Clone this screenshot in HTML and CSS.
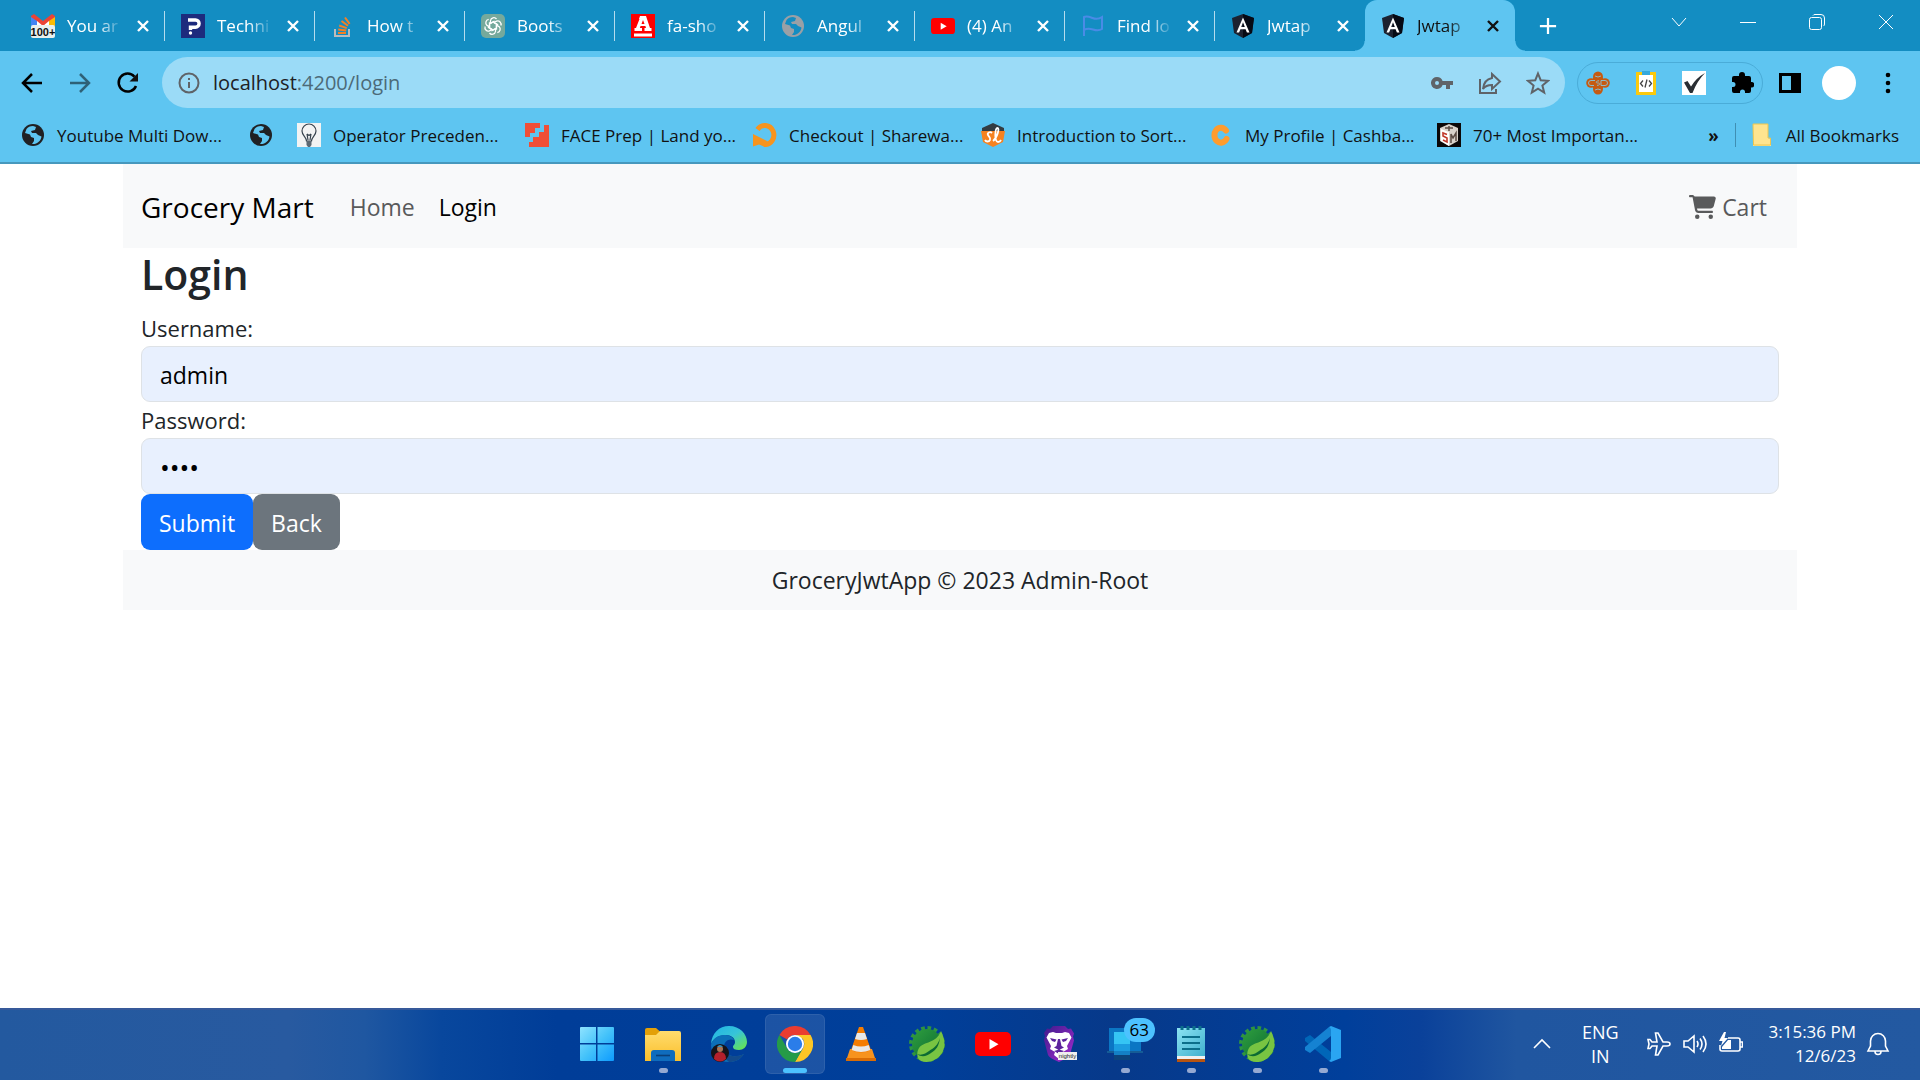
FILE: index.html
```html
<!DOCTYPE html>
<html lang="en">
<head>
<meta charset="utf-8">
<title>Jwtapp</title>
<link rel="stylesheet" href="styles.css">
</head>
<body>
<svg class="defs" aria-hidden="true">
  <defs>
    <linearGradient id="g-win" x1="0" y1="0" x2="1" y2="1"><stop offset="0" stop-color="#8fe3ff"/><stop offset=".5" stop-color="#45c3fa"/><stop offset="1" stop-color="#0d9bff"/></linearGradient>
    <linearGradient id="g-folder" x1="0" y1="0" x2="0" y2="1"><stop offset="0" stop-color="#ffdc6e"/><stop offset="1" stop-color="#fbbf2b"/></linearGradient>
    <linearGradient id="g-edge" x1="0" y1="0" x2="1" y2="1"><stop offset="0" stop-color="#1fb3e6"/><stop offset=".5" stop-color="#37c4d8"/><stop offset="1" stop-color="#6ce83f"/></linearGradient>
    <linearGradient id="g-brave" x1="0" y1="0" x2="1" y2="1"><stop offset="0" stop-color="#3f1c8c"/><stop offset="1" stop-color="#a62bd0"/></linearGradient>
    <linearGradient id="g-note" x1="0" y1="0" x2="1" y2="1"><stop offset="0" stop-color="#8ce3f2"/><stop offset="1" stop-color="#3fb0cf"/></linearGradient>
    <linearGradient id="g-spring" x1="0" y1="0" x2="1" y2="1"><stop offset="0" stop-color="#2f9e3e"/><stop offset="1" stop-color="#0b6b33"/></linearGradient>
    <symbol id="close" viewBox="0 0 16 16"><path d="M3 3l10 10M13 3L3 13" fill="none" stroke="currentColor" stroke-width="2.4"/></symbol>
    <symbol id="globe" viewBox="0 0 24 24"><circle cx="12" cy="12" r="11" fill="currentColor"/><path d="M12 3c-3 0-5 1-6.500 3L4 10l5 1.500 1 2.500 3 1v3l-2 3c5 .500 9-3 9.500-7.500L17 12l-2-2h-4l-1-2 4-1 1-3z" fill="var(--land)"/></symbol>
    <symbol id="angular" viewBox="0 0 24 24"><path d="M12 0l11 4-2 15-9 5-9-5L1 4z" fill="#1c2230"/><path d="M12 0l11 4-2 15-9 5z" fill="#060a14"/><path d="M12 3.500L5.500 18.500h2.600l1.300-3.300h5.200l1.300 3.300h2.600zm0 4.700l1.800 4.900h-3.600z" fill="#fff"/></symbol>
    <symbol id="youtube" viewBox="0 0 36 24"><rect width="36" height="24" rx="5" fill="#f00"/><path d="M14.500 7v10.500l9-5.200z" fill="#fff"/></symbol>
    <symbol id="spring" viewBox="0 0 36 36"><circle cx="18" cy="18" r="16" fill="none" stroke="#2f9440" stroke-width="4" stroke-dasharray="3.600 2.683"/><circle cx="18" cy="18" r="15" fill="url(#g-spring)"/><path d="M32 5c3 6 5 13 2 20-4 9-14 13-22 10-4-2-5-8-2-13 5-7 17-4 22-17z" fill="#78c442"/><path d="M8 28c5 2 9-1 12-3 5-3 9-6 11-13-1 8-4 12-9 15-4 3-9 5-14 1z" fill="#0b6b33"/></symbol>
  </defs>
</svg>

<header class="browser">
  <div class="tabstrip">
    <nav class="tabs" aria-label="Tabs">
      <div class="tab"><svg class="fav" viewBox="0 0 24 24"><path d="M0 11V2l3-2 9 7 9-7 3 2v9z" fill="#ea4335"/><path d="M0 3v9h6V7z" fill="#4285f4"/><path d="M24 3v9h-6V7z" fill="#fbbc04"/><path d="M6 7l6 5 6-5v5H6z" fill="#fff"/><rect y="11" width="24" height="13" rx="2" fill="#e9f0ee"/><text x="12" y="22" text-anchor="middle" class="fav-count">100+</text></svg><span class="tab-title">You ar</span><button class="tab-close" aria-label="Close tab"><svg><use href="#close"/></svg></button></div>
      <div class="tab"><svg class="fav" viewBox="0 0 24 24"><rect width="24" height="24" fill="#1d2b7d"/><path d="M7 6h7.500a3.600 3.600 0 010 7.200H9.500V16" fill="none" stroke="#fff" stroke-width="3.400"/><circle cx="9.500" cy="19" r="1.700" fill="#fff"/></svg><span class="tab-title">Techni</span><button class="tab-close" aria-label="Close tab"><svg><use href="#close"/></svg></button></div>
      <div class="tab"><svg class="fav" viewBox="0 0 24 24"><path d="M4 15v7h14v-7" fill="none" stroke="#bcbbbb" stroke-width="2"/><path d="M7 19h8M7.200 15.500l8 1M8.200 11.500l7.600 2.600M10.500 7l6.500 4.700M14 3.500l4.600 6.400" stroke="#f48024" stroke-width="2"/></svg><span class="tab-title">How t</span><button class="tab-close" aria-label="Close tab"><svg><use href="#close"/></svg></button></div>
      <div class="tab"><svg class="fav" viewBox="0 0 24 24"><rect width="24" height="24" rx="5" fill="#75a99c"/><g fill="none" stroke="#fff" stroke-width="1.300"><path id="petal" d="M9.500 9.500V6.500a3.400 3.400 0 016-1.500M9.500 9.500l2.600-1.500 5 2.900"/><use href="#petal" transform="rotate(60 12 12)"/><use href="#petal" transform="rotate(120 12 12)"/><use href="#petal" transform="rotate(180 12 12)"/><use href="#petal" transform="rotate(240 12 12)"/><use href="#petal" transform="rotate(300 12 12)"/></g></svg><span class="tab-title">Boots</span><button class="tab-close" aria-label="Close tab"><svg><use href="#close"/></svg></button></div>
      <div class="tab"><svg class="fav" viewBox="0 0 24 24"><rect width="24" height="24" fill="#f00"/><path d="M9 2h6l4 12h1.500v3h-7v-3H15l-.6-2H9.500l-.6 2H11v3H3.500v-3H5L8.500 5H8zm3 4l-1.500 4h3z" fill="#fff"/><path d="M3 19.500h18v3H3z" fill="#fff"/></svg><span class="tab-title">fa-sho</span><button class="tab-close" aria-label="Close tab"><svg><use href="#close"/></svg></button></div>
      <div class="tab"><svg class="fav globe-muted"><use href="#globe"/></svg><span class="tab-title">Angul</span><button class="tab-close" aria-label="Close tab"><svg><use href="#close"/></svg></button></div>
      <div class="tab"><svg class="fav"><use href="#youtube"/></svg><span class="tab-title">(4) An</span><button class="tab-close" aria-label="Close tab"><svg><use href="#close"/></svg></button></div>
      <div class="tab"><svg class="fav" viewBox="0 0 24 24"><path d="M3 22V3c3-1.500 6 0 8.500 1S18 5 21 3v12c-3 2-6 1.500-9 .500S6 14 3 16" fill="none" stroke="#4a8be6" stroke-width="2"/></svg><span class="tab-title">Find lo</span><button class="tab-close" aria-label="Close tab"><svg><use href="#close"/></svg></button></div>
      <div class="tab no-line"><svg class="fav"><use href="#angular"/></svg><span class="tab-title">Jwtap</span><button class="tab-close" aria-label="Close tab"><svg><use href="#close"/></svg></button></div>
      <div class="tab active"><svg class="fav"><use href="#angular"/></svg><span class="tab-title">Jwtap</span><button class="tab-close" aria-label="Close tab"><svg><use href="#close"/></svg></button></div>
      <button class="new-tab" aria-label="New tab"><svg viewBox="0 0 20 20"><path d="M10 1v18M1 10h18" stroke="currentColor" stroke-width="2.500"/></svg></button>
    </nav>
    <div class="window-buttons">
      <button aria-label="Search tabs"><svg viewBox="0 0 16 16"><path d="M1 4l7 8 7-8"/></svg></button>
      <button aria-label="Minimize"><svg viewBox="0 0 16 16"><path d="M0 8.500h16"/></svg></button>
      <button aria-label="Restore"><svg viewBox="0 0 16 16"><rect x=".5" y="3.500" width="12" height="12" rx="2"/><path d="M4 1.500q.500-1 2-1h6q3.500 0 3.500 3.500v6q0 1.500-1 2"/></svg></button>
      <button aria-label="Close"><svg viewBox="0 0 16 16"><path d="M1 1l14 14M15 1L1 15"/></svg></button>
    </div>
  </div>

  <div class="toolbar">
    <div class="nav-buttons">
      <button aria-label="Back"><svg viewBox="0 0 24 24"><path d="M22 12H3M12 3l-9 9 9 9"/></svg></button>
      <button class="faded" aria-label="Forward"><svg viewBox="0 0 24 24"><path d="M2 12h19M12 3l9 9-9 9"/></svg></button>
      <button aria-label="Reload"><svg viewBox="0 0 24 24"><path d="M20 15a9 9 0 11-1.500-9.300"/><path d="M22 2v8.500h-8.500z" fill="currentColor" stroke="none"/></svg></button>
    </div>
    <div class="omnibox">
      <svg class="ico" viewBox="0 0 24 24"><circle cx="12" cy="12" r="9.500"/><path d="M12 11v6M12 7v2"/></svg>
      <span class="url"><b>localhost</b>:4200/login</span>
      <button aria-label="Passwords"><svg class="ico" viewBox="0 0 24 24"><path d="M7 6a6 6 0 105.600 8H16v4h4v-4h3v-4H12.600A6 6 0 007 6zm0 4a2 2 0 110 4 2 2 0 010-4z" fill="currentColor" stroke="none"/></svg></button>
      <button aria-label="Share"><svg class="ico" viewBox="0 0 24 24"><path d="M2 8v14h16v-4M14 3l8 7.500-8 7.500v-4c-4 0-7 1-9 4 .500-6 4-10 9-11z"/></svg></button>
      <button aria-label="Bookmark"><svg class="ico" viewBox="0 0 24 24"><path d="M12 2.500l2.700 6.700 7.300.600-5.600 4.700 1.800 7.100-6.200-3.900-6.200 3.900 1.800-7.100L2 9.800l7.300-.6z"/></svg></button>
    </div>
    <div class="extensions">
      <button aria-label="Extension"><svg viewBox="0 0 24 24"><g fill="#c55a11"><ellipse cx="12" cy="6" rx="5" ry="5.500"/><ellipse cx="12" cy="18" rx="5" ry="5.500"/><circle cx="5" cy="12" r="4.800"/><circle cx="19" cy="12" r="4.800"/><path d="M7 7h10v10H7z"/></g><path d="M9 9.500H5a2.500 2.500 0 000 5h3M13 9.800c-3 0-4 2.200-1 2.200s2 2.500-1 2.300M15 14.500h4a2.500 2.500 0 000-5h-4zM9 5q3 2 6 0M9 19q3-2 6 0" fill="none" stroke="#8fb9c4" stroke-width="1"/></svg></button>
      <button aria-label="Extension"><svg viewBox="0 0 24 24"><path d="M2 1h20v23H2z" fill="#fbc90d"/><path d="M5 4h14v17H5z" fill="#fff"/><path d="M8 0h8v4H8z" fill="#35a9dd"/><path d="M9 9.500L6.500 12.500 9 15.500M15 9.500l2.500 3-2.500 3M13 8.500l-2 8" fill="none" stroke="#444" stroke-width="1.300"/></svg></button>
      <button aria-label="Extension"><svg viewBox="0 0 24 24"><path d="M0 0h24v24H0z" fill="#fff"/><path d="M2 11.500L5.500 10 9 15.500Q14 7 23 2 15 10 10.500 22H8z" fill="#2a2e33"/></svg></button>
      <button aria-label="Extensions"><svg viewBox="0 0 24 24"><path d="M9 4a3 3 0 016 0v1h4a2 2 0 012 2v4h.500a2.700 2.700 0 010 5.500H21V20a2 2 0 01-2 2h-4v-1a2.500 2.500 0 00-5 0v1H4a2 2 0 01-2-2v-4h1a2.500 2.500 0 000-5H2V7a2 2 0 012-2h5z" fill="#000"/></svg></button>
    </div>
    <div class="profile">
      <button aria-label="Side panel"><svg viewBox="0 0 24 24"><path d="M1 2h22v20H1zm3 3v14h9V5z" fill="#000" fill-rule="evenodd"/></svg></button>
      <button class="avatar" aria-label="Profile"></button>
      <button aria-label="Menu"><svg viewBox="0 0 24 24"><circle cx="12" cy="4" r="2.300"/><circle cx="12" cy="12" r="2.300"/><circle cx="12" cy="20" r="2.300"/></svg></button>
    </div>
  </div>

  <nav class="bookmarks" aria-label="Bookmarks">
    <a href="#" class="bookmark"><svg class="globe-dark"><use href="#globe"/></svg><span>Youtube Multi Dow...</span></a>
    <a href="#" class="bookmark bare" aria-label="Bookmark"><svg class="globe-dark"><use href="#globe"/></svg></a>
    <a href="#" class="bookmark"><svg viewBox="0 0 24 24"><path d="M0 0h24v24H0z" fill="#f3f3f3"/><path d="M9.500 18c0-4-4.500-5.500-4.500-10a7 7 0 0114 0c0 4.500-4.500 6-4.500 10zM10 11l1 6M14 11l-1 6M10 11l2 1.500 2-1.500" fill="none" stroke="#37424d" stroke-width="1.200"/><path d="M9.500 18h5v4l-1.500 2h-2l-1.500-2z" fill="#5d6872"/></svg><span>Operator Preceden...</span></a>
    <a href="#" class="bookmark"><svg viewBox="0 0 24 24"><path d="M0 0h15v5h-5v5H5v4H0zM24 2v22H4v-5h4v-5h6V9h5V2z" fill="#f04e37"/></svg><span>FACE Prep | Land yo...</span></a>
    <a href="#" class="bookmark"><svg viewBox="0 0 24 24"><path d="M4.500 6.500A9 9.500 0 1111 21.500" fill="none" stroke="#f7941e" stroke-width="5"/><path d="M0 11l14 7-2 6-6-2.500-6 2z" fill="#f7941e"/></svg><span>Checkout | Sharewa...</span></a>
    <a href="#" class="bookmark"><svg viewBox="0 0 24 24"><path d="M12 0l11 5v3H1V5z" fill="#333c42"/><path d="M0 8h24l-2 11-10 5-10-5z" fill="#f58220"/><path d="M11 10c-2-2-5 0-4 2s3 3 2 5-4 2-5 0M12 18c4-3 7-13 4.500-13S13 19 17 19q2 0 3-2" fill="none" stroke="#fff" stroke-width="1.800"/></svg><span>Introduction to Sort...</span></a>
    <a href="#" class="bookmark"><svg viewBox="0 0 24 24"><path d="M17 7.500A6.500 7.500 0 1017.500 16" fill="none" stroke="#ff9c2e" stroke-width="6" stroke-linecap="round"/></svg><span>My Profile | Cashba...</span></a>
    <a href="#" class="bookmark"><svg viewBox="0 0 24 24"><path d="M0 0h24v24H0z" fill="#0b0808"/><path d="M12 1l9 4v13l-9 5-9-5V5z" fill="#d9d2ca"/><path d="M4 6l8 3v14l-8-5z" fill="#fff"/><path d="M10 11.500L6 10v3l4 2v4l-4-2" fill="none" stroke="#c0392b" stroke-width="1.600"/><path d="M14 20v-9l2 4 3-5v8M8 5h8M12 3v5" fill="none" stroke="#5b4b43" stroke-width="1.500"/></svg><span>70+ Most Importan...</span></a>
    <button class="more" aria-label="More bookmarks">»</button>
    <a href="#" class="bookmark all"><svg viewBox="0 0 24 24"><path d="M3 1h15v14l3 1v7H3z" fill="#ffe48f"/><path d="M3 1h15v14h2.500v7h-17z" fill="none" stroke="#eec64e"/></svg><span>All Bookmarks</span></a>
  </nav>
</header>

<main class="page">
  <div class="container">
    <nav class="navbar" aria-label="Main">
      <a class="brand" href="#">Grocery Mart</a>
      <a class="nav-link" href="#">Home</a>
      <a class="nav-link current" href="#">Login</a>
      <a class="nav-link cart" href="#"><svg viewBox="0 0 576 512"><path d="M0 24C0 10.700 10.700 0 24 0h45.500c22 0 41.500 12.800 50.600 32h411c26.300 0 45.500 25 38.600 50.400l-41 152.300c-8.500 31.400-37 53.300-69.500 53.300H170.700l5.400 28.500c2.200 11.300 12.100 19.500 23.600 19.500H488c13.300 0 24 10.700 24 24s-10.700 24-24 24H199.700c-34.600 0-64.300-24.600-70.700-58.500L77.400 54.500C76.700 50.700 73.400 48 69.500 48H24C10.700 48 0 37.300 0 24zM128 464a48 48 0 1196 0 48 48 0 11-96 0zm336-48a48 48 0 110 96 48 48 0 110-96z" fill="currentColor"/></svg><span>Cart</span></a>
    </nav>
    <form class="login">
      <h1>Login</h1>
      <label for="username">Username:</label>
      <input id="username" type="text" value="admin">
      <label for="password">Password:</label>
      <input id="password" type="password" value="root">
      <div class="actions"><button class="btn primary" type="button">Submit</button><button class="btn secondary" type="button">Back</button></div>
    </form>
    <footer class="footer">GroceryJwtApp © 2023 Admin-Root</footer>
  </div>
</main>

<footer class="taskbar">
  <div class="apps">
    <button class="app" aria-label="Start"><svg viewBox="0 0 36 36"><path d="M1 2q0-1 1-1h15v16H1zM18.500 1H34q1 0 1 1v15H18.500zM1 18.500h16V35H2q-1 0-1-1zM18.500 18.500H35V34q0 1-1 1H18.500z" fill="url(#g-win)"/></svg></button>
    <button class="app running" aria-label="File Explorer"><svg viewBox="0 0 36 36"><path d="M0 4q0-2 2-2h9l4 3.500L12 10H0z" fill="#e3a008"/><path d="M0 9h11l4-4h19q2 0 2 2v28H0z" fill="url(#g-folder)"/><path d="M6 35v-8q0-3 3-3h18q3 0 3 3v8z" fill="#0f6cbd"/><path d="M11 29.500h14" stroke="#0a3f78" stroke-width="1.600"/></svg></button>
    <button class="app" aria-label="Edge"><svg viewBox="0 0 36 36"><path d="M0 18C1 7 8 0 18 0c11 0 18 8 18 16 0 5-4 8-8 8-4 0-6-1-6-3s2-2 2-5c0-4-4-7-9-7C7 9 2 13 0 18z" fill="url(#g-edge)"/><path d="M0 19c1-6 7-10 13-10 5 0 9 2 10 5-6-2-10 2-10 7 0 8 9 12 20 7-4 6-9 8-15 8C8 36 0 29 0 19z" fill="#0c6fb8"/><path d="M13 21c0 8 9 12 20 7-4 6-9 8-15 8-4-3-6-9-5-15z" fill="#124a8c"/><circle cx="9" cy="27" r="9" fill="#171419"/><path d="M3 33q0-7 6-7t6 7q-6 5-12 0z" fill="#b3202c"/><circle cx="9" cy="23" r="3" fill="#a97455"/><path d="M6 21q3-4 6 0z" fill="#3d8fb5"/></svg></button>
    <button class="app running focused" aria-label="Chrome"><svg viewBox="0 0 36 36"><path d="M2.400 9A18 18 0 0133.600 9H18a9 9 0 00-7.800 4.500z" fill="#ea3c30"/><path d="M33.600 9A18 18 0 0118 36l7.800-13.500A9 9 0 0025.800 13L18 9z" fill="#fcc626"/><path d="M18 36A18 18 0 012.400 9l7.800 13.500A9 9 0 0025.800 22.500z" fill="#259b48"/><circle cx="18" cy="18" r="9" fill="#fff"/><circle cx="18" cy="18" r="7.200" fill="#2b7de9"/></svg></button>
    <button class="app" aria-label="VLC"><svg viewBox="0 0 36 36"><path d="M7 23h22l4 12H3z" fill="#f7931e"/><path d="M3 32h30v3H3z" fill="#d96c05"/><path d="M16 1h4l8 23q-10 5-20 0z" fill="#f57c00"/><path d="M14 7h8l2 6q-6 2-12 0zM10.300 19q7.700 3 15.400 0l1.700 5q-9.400 4-18.800 0z" fill="#e8e8e8"/></svg></button>
    <button class="app" aria-label="Spring Tools"><svg><use href="#spring"/></svg></button>
    <button class="app" aria-label="YouTube"><svg><use href="#youtube"/></svg></button>
    <button class="app" aria-label="Brave Nightly"><svg viewBox="0 0 36 36"><path d="M12 0h12l3 3 3-.5 3 5-1 3 1 4-4 14q-1 3-11 7.500Q8 32 7 29L3 14l1-4-1-3 3-4.500 3 .500z" fill="url(#g-brave)"/><path d="M12 6l3 1h6l3-1 4 1 2.500 4.500L26 20l1 3-5 3 1 3-5 4-5-4 1-3-5-3 1-3-4.500-8.500L8 7z" fill="#fff"/><path d="M9 12l6.500 1.500-1.500 2.500-3-1zM27 12l-6.500 1.500 1.500 2.500 3-1zM17 13h2l1.500 7 2.500 1.500-5 2.500-5-2.500 2.500-1.500zM13 25l5-1.500 5 1.500-5 3z" fill="#5b239c"/><path d="M17 26h19v8H17z" fill="#eee"/><text x="26.500" y="32" text-anchor="middle" class="nightly">nightly</text></svg></button>
    <button class="app running" aria-label="Phone Link"><svg viewBox="0 0 36 36"><path d="M2 2h32v24H2z" fill="#0b76c4"/><path d="M0 25h36v2H0z" fill="#155c96"/><path d="M7 6h16v28H7z" fill="#1481c6"/><path d="M7 6h16v12H7z" fill="#35c5f4"/><path d="M7 18h16v7H7z" fill="#1b9de0"/><path d="M7 29h16v5H7z" fill="#0c447c"/></svg><span class="badge">63</span></button>
    <button class="app running" aria-label="Notepad"><svg viewBox="0 0 36 36"><path d="M4 30h28v6H4z" fill="#b85410"/><path d="M4 29h28v4H4z" fill="#f0f0f0"/><path d="M4 2h28v28H4z" fill="url(#g-note)"/><path d="M9 11h18M9 17h18M9 23h18" stroke="#0b6e8a" stroke-width="2"/><path d="M9 0v4M15 0v4M21 0v4M27 0v4" stroke="#0b6e8a" stroke-width="3"/></svg></button>
    <button class="app running" aria-label="Spring Tools"><svg><use href="#spring"/></svg></button>
    <button class="app running" aria-label="VS Code"><svg viewBox="0 0 36 36"><path d="M26 26L5 9 0 12v3l24 20 3-1z" fill="#0066b8"/><path d="M26 10L5 27l-5-3v-3L24 1l3 1z" fill="#1582d2"/><path d="M26 0l10 4v28l-10 4-2-1q2-1 2-3V4q0-2-2-3z" fill="#2aa5f2"/></svg></button>
  </div>
  <div class="tray">
    <button aria-label="Hidden icons"><svg viewBox="0 0 24 24"><path d="M4 16l8-8 8 8"/></svg></button>
    <button class="lang">ENG<br>IN</button>
    <button class="status" aria-label="System status">
      <svg viewBox="0 0 24 24"><path d="M23 12q0-2-3-2h-4L11 1H8.500L10 10H5L3 7.500H1L2 12l-1 4.500h2L5 14h5L8.500 23H11l5-9h4q3 0 3-2z"/></svg>
      <svg viewBox="0 0 24 24"><path d="M1 9v6h4l6 5V4L5 9zM14 9q2 3 0 6M17 6.500q4 5.500 0 11M20 4q6 8 0 16"/></svg>
      <svg viewBox="0 0 24 24"><path d="M9 6h10q2 0 2 2v9q0 2-2 2H3q-2 0-2-2v-4M21 10h2.500v5H21"/><path d="M5 0L0 9h3.500L2 14l7-8H5.500L7 0zM9 8h3v9H3v-2z" fill="currentColor" stroke="none"/></svg>
    </button>
    <button class="clock">3:15:36 PM<br>12/6/23</button>
    <button aria-label="Notifications"><svg viewBox="0 0 24 24"><path d="M2 19h20l-2.500-5V9a7.500 7.500 0 00-15 0v5zM9 19.500a3 3 0 006 0"/></svg></button>
  </div>
</footer>
</body>
</html>
```
FILE: styles.css
```css
* { box-sizing: border-box; }
body {
  margin: 0;
  min-height: 100vh;
  display: flex;
  flex-direction: column;
  background: #fff;
  color: #212529;
  font-family: "Open Sans", "Noto Sans", sans-serif;
}
button {
  font: inherit;
  color: inherit;
  background: none;
  border: 0;
  padding: 0;
}
a { color: inherit; text-decoration: none; }
svg { display: block; flex: none; }
.defs { position: absolute; width: 0; height: 0; }

/* Browser chrome */
.browser { background: #5ec5f1; border-bottom: 2px solid #4798bd; font-size: 17px; color: #111; }
.tabstrip {
  display: flex;
  justify-content: space-between;
  height: 51px;
  background: #138dc2;
  color: #fff;
}
.tabs { display: flex; align-items: center; padding-left: 15px; }
.tab {
  position: relative;
  display: flex;
  align-items: center;
  width: 150px;
  height: 51px;
  padding-left: 16px;
}
.tab::after {
  content: "";
  position: absolute;
  right: 0;
  top: 11px;
  width: 1px;
  height: 30px;
  background: #b5dcee;
}
.tab.no-line::after { display: none; }
.tab.active { background: #5ec5f1; color: #111; border-radius: 12px 12px 0 0; }
.tab.active::before, .tab.active::after {
  content: "";
  position: absolute;
  top: auto;
  bottom: 0;
  width: 10px;
  height: 10px;
}
.tab.active::before { left: -10px; background: radial-gradient(circle at 0 0, transparent 9px, #5ec5f1 10px); }
.tab.active::after { right: -10px; background: radial-gradient(circle at 100% 0, transparent 9px, #5ec5f1 10px); }
.fav { width: 24px; height: 24px; }
.fav-count { font: bold 11px "Liberation Sans", sans-serif; fill: #111; }
.tab-title {
  width: 56px;
  margin-left: 12px;
  white-space: nowrap;
  mask-image: linear-gradient(90deg, #000 55%, transparent);
}
.tab-close { margin-left: 12px; }
.tab-close svg { width: 16px; height: 16px; }
.new-tab { margin-left: 24px; }
.new-tab svg { width: 18px; height: 18px; }
.globe-muted { color: #9aa0a6; --land: #138dc2; }
.globe-dark { color: #202124; --land: #5ec5f1; }
.window-buttons { display: flex; height: 43px; }
.window-buttons button { display: grid; place-items: center; width: 69px; }
.window-buttons svg { width: 16px; height: 16px; fill: none; stroke: #fff; }

.toolbar { display: flex; align-items: center; height: 63px; padding: 0 20px; }
.nav-buttons { display: flex; gap: 24px; width: 142px; }
.nav-buttons svg { width: 24px; height: 24px; fill: none; stroke: #000; stroke-width: 2.500; }
.faded { opacity: .5; }
.omnibox {
  flex: 1;
  display: flex;
  align-items: center;
  gap: 24px;
  height: 51px;
  padding: 0 15px;
  border-radius: 26px;
  background: #9bdbf7;
  color: #4c6a78;
  font-size: 20px;
}
.ico { width: 24px; height: 24px; fill: none; stroke: #5f6368; stroke-width: 2; color: #5f6368; }
.url { flex: 1; margin-left: -12px; }
.url b { font-weight: 400; color: #202124; }
.extensions {
  display: flex;
  align-items: center;
  gap: 24px;
  height: 42px;
  margin-left: 12px;
  padding: 0 8px;
  border: 1px solid #4aacd8;
  border-radius: 21px;
}
.extensions svg, .profile svg { width: 24px; height: 24px; }
.profile { display: flex; align-items: center; gap: 20px; margin-left: 15px; }
.avatar { width: 34px; height: 34px; border-radius: 50%; background: #fff; }

.bookmarks { display: flex; align-items: center; gap: 24px; height: 48px; padding: 0 21px 6px; }
.bookmark { display: flex; align-items: center; gap: 12px; width: 204px; white-space: nowrap; }
.bookmark svg { width: 24px; height: 24px; }
.bookmark.bare { width: 24px; }
.bookmark.all { width: auto; margin-left: -8px; padding-left: 14px; border-left: 1px solid #3f8fb3; }
.more { margin-left: auto; font-weight: 700; }

/* Web page */
.page { flex: 1; font-size: 23px; line-height: 36px; }
.container { max-width: 1674px; margin: 0 auto; }
.navbar {
  display: flex;
  align-items: center;
  gap: 24px;
  height: 84px;
  padding: 2px 30px 0 18px;
  background: #f8f9fa;
}
.brand { margin-right: 12px; font-size: 28px; color: #000; }
.nav-link { color: #595a5b; }
.nav-link.current { color: #000; }
.cart { display: flex; align-items: center; gap: 6px; margin-left: auto; }
.cart svg { width: 27px; height: 24px; }
.login { display: flex; flex-direction: column; padding: 0 18px; }
.login h1 { margin: 0 0 10px; font-size: 41px; font-weight: 600; line-height: 52px; }
.login label { font-size: 22px; }
.login input {
  width: 100%;
  height: 56px;
  padding: 2px 18px 0;
  border: 1px solid #dee2e6;
  border-radius: 9px;
  background: #e8f0fe;
  color: #000;
  font: inherit;
}
.login input[type="password"] { font-size: 26px; }
.actions { display: flex; }
.btn { height: 56px; padding: 2px 18px 0; border-radius: 9px; color: #fff; }
.primary { background: #0d6efd; }
.secondary { background: #6c757d; }
.footer { padding: 12px 0; background: #f8f9fa; text-align: center; }

/* Taskbar */
.taskbar {
  display: grid;
  grid-template-columns: 1fr auto 1fr;
  align-items: center;
  height: 72px;
  padding-bottom: 2px;
  border-top: 2px solid #36599a;
  background: linear-gradient(90deg, #23599f 0, #285aa0 15%, #1f57a1 19%, #08479d 23%, #003d98 29%, #003f9a 48%, #07398a 58%, #003f9b 70%, #0a419a 74%, #2056a0 79%, #2359a1 100%);
  color: #fff;
  font-size: 17px;
  line-height: 24px;
}
.apps { grid-column: 2; display: flex; gap: 6px; }
.app { position: relative; display: grid; place-items: center; width: 60px; height: 60px; border-radius: 6px; }
.app svg { width: 36px; height: 36px; }
.app.focused { background: #ffffff1c; box-shadow: inset 0 0 0 1px #ffffff14; }
.app.running::after {
  content: "";
  position: absolute;
  bottom: 1px;
  left: 26px;
  width: 9px;
  height: 5px;
  border-radius: 3px;
  background: #95a9d2;
}
.app.focused::after { left: 18px; width: 24px; background: #4cc2ff; }
.badge {
  position: absolute;
  top: 4px;
  right: 0;
  padding: 0 6px;
  border-radius: 12px;
  background: #4cc2ff;
  color: #000;
}
.nightly { font: 6px "Liberation Sans", sans-serif; fill: #222; }
.tray { display: flex; justify-content: flex-end; align-items: center; padding-right: 30px; }
.tray svg { width: 24px; height: 24px; fill: none; stroke: #fff; stroke-width: 1.600; }
.lang { margin-left: 28px; font-size: 18px; text-align: center; }
.status { display: flex; gap: 12px; margin-left: 28px; }
.clock { margin: 0 10px 0 26px; text-align: right; }
```
